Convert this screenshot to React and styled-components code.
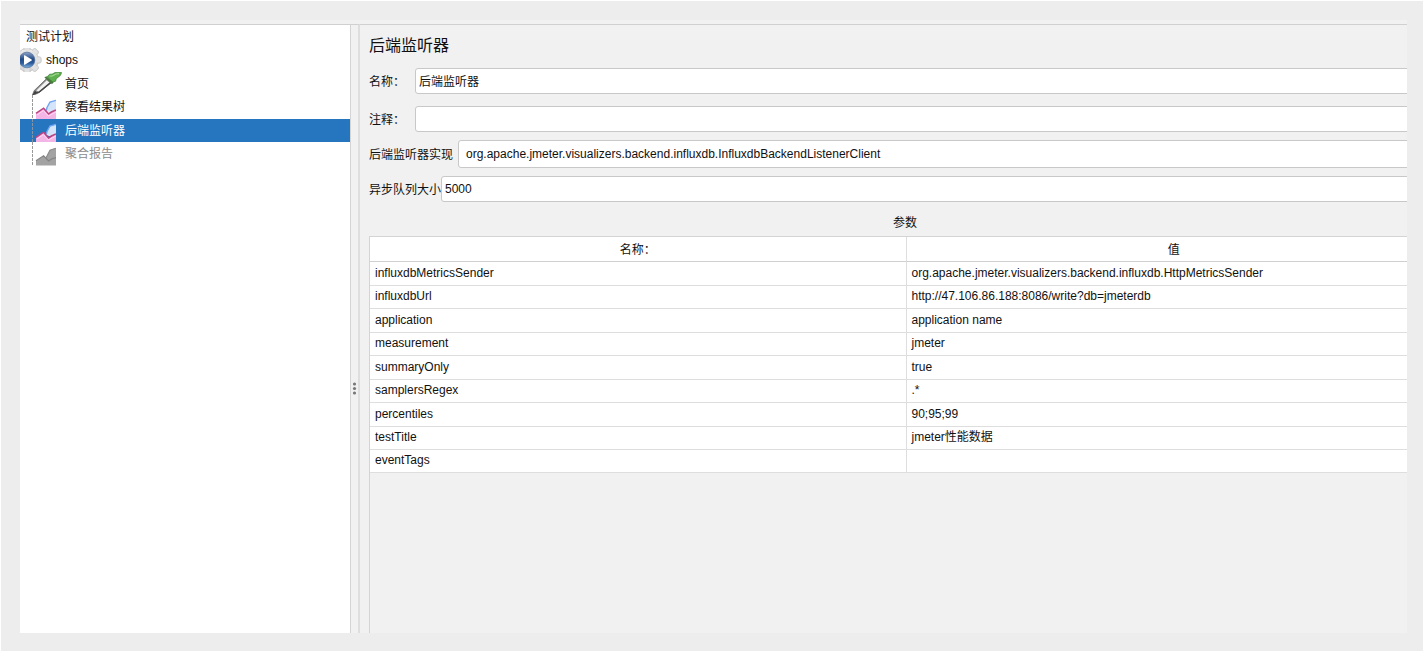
import React, { useState } from 'react';
import styled, { createGlobalStyle } from 'styled-components';

const GlobalStyle = createGlobalStyle`
  * {
    box-sizing: border-box;
  }

  body {
    margin: 0;
    background: #ededed;
    color: #111;
    font-family: "Liberation Sans", "Noto Sans CJK SC", sans-serif;
    font-size: 12px;
    line-height: 16px;
  }

  button, input, select {
    font: inherit;
    color: inherit;
  }
`;

const Page = styled.div`
  display: flex;
  min-height: 100vh;
  padding: 19px 16px 18px 19px;
  border-top: 1px solid #fff;
  border-left: 1px solid #fff;
`;

const Window = styled.div`
  flex: 1;
  min-width: 0;
  display: flex;
  padding-top: 4px;
  background: #f1f1f1;
`;

const Sidebar = styled.nav`
  flex: 0 0 331px;
  background: #fff;
  border-top: 1px solid #d0d0d0;
  border-right: 1px solid #d4d4d4;
`;

const Tree = styled.ul`
  margin: 0;
  padding: 0;
  list-style: none;
`;

const TreeItem = styled.li`
  height: 23px;

  &:nth-child(even) {
    height: 24px;
  }
`;

const TreeButton = styled.button`
  display: flex;
  align-items: center;
  width: 100%;
  height: 100%;
  padding: 0 0 0 ${({ $indent }) => $indent}px;
  border: 0;
  text-align: left;
  overflow: hidden;
  background: ${({ $selected }) => ($selected ? '#2675bf' : 'transparent')};
  color: ${({ $selected, $muted }) => ($selected ? '#fff' : $muted ? '#8c8c8c' : '#111')};
`;

const IconCell = styled.span`
  flex: 0 0 ${({ $width }) => $width}px;
  display: flex;
  height: 100%;

  svg {
    display: block;
    flex: none;
  }
`;

const Splitter = styled.div`
  flex: 0 0 9px;
  display: flex;
  flex-direction: column;
  align-items: center;
  border-top: 1px solid #d0d0d0;
  border-right: 2px solid #dedede;

  &::before {
    content: '';
    flex: 3;
  }

  &::after {
    content: '';
    flex: 2;
  }
`;

const Editor = styled.main`
  flex: 1;
  min-width: 0;
  display: flex;
  overflow: hidden;
  border-top: 1px solid #d0d0d0;
  padding-left: 9px;
`;

/* the form is wider than its viewport and runs out at the right */
const Form = styled.div`
  flex: 0 0 auto;
  width: calc(100% + 34px);
  display: flex;
  flex-direction: column;
`;

const Title = styled.h1`
  margin: 9px 0 10px;
  font-size: 16px;
  line-height: 24px;
  font-weight: 400;
`;

const Field = styled.div`
  display: flex;
  align-items: center;
  gap: ${({ $gap }) => $gap || 0}px;
  margin-bottom: ${({ $space }) => $space}px;
`;

const Label = styled.label`
  flex: 0 0 auto;
  min-width: ${({ $width }) => ($width ? `${$width}px` : 'auto')};
  padding-top: 2px;
`;

const TextInput = styled.input`
  flex: 1;
  min-width: 0;
  height: 26px;
  padding: 0 3px 1px;
  border: 1px solid #c8c8c8;
  border-radius: 3px;
  background: #fff;
`;

const Select = styled.select`
  flex: 1;
  min-width: 0;
  height: 28px;
  padding: 0 7px;
  border: 1px solid #c8c8c8;
  border-radius: 3px;
  background: #fff;
  appearance: none;
`;

const TableView = styled.div`
  flex: 1;
  border-top: 1px solid #d4d4d4;
  border-left: 1px solid #d4d4d4;
`;

const TableTitle = styled.h2`
  margin: 0 0 4px;
  padding-top: 1px;
  font-size: 12px;
  line-height: 18px;
  font-weight: 400;
  text-align: center;
`;

const Table = styled.table`
  width: 100%;
  table-layout: fixed;
  border-collapse: separate;
  border-spacing: 0;
  background: #fff;

  th, td {
    padding: 0 5px;
    border-bottom: 1px solid #dedede;
    font-weight: 400;
    line-height: 16px;
  }

  th + th, td + td {
    border-left: 1px solid #dedede;
  }

  th {
    height: 25px;
    padding-top: 2px;
    border-bottom-color: #d0d0d0;
  }

  td {
    height: 23px;
    padding-bottom: 2px;
    text-align: left;
  }

  tbody tr:nth-child(odd):not(:last-child) td {
    height: 24px;
  }
`;

const GearIcon = () => (
    <svg width="22" height="24" viewBox="0 0 22 24">
        <defs>
            <linearGradient id="gear" gradientUnits="userSpaceOnUse" x1="0" y1="0" x2="0" y2="24">
                <stop offset="0" stopColor="#ececec" />
                <stop offset="1" stopColor="#d2d2d2" />
            </linearGradient>
            <linearGradient id="play" x1="0" y1="0" x2="0" y2="1">
                <stop offset="0" stopColor="#8ba3c9" />
                <stop offset="0.45" stopColor="#234a86" />
                <stop offset="0.7" stopColor="#2c5c9c" />
                <stop offset="1" stopColor="#7fb2e2" />
            </linearGradient>
        </defs>
        <g fill="url(#gear)" stroke="#c4c4c4" strokeWidth=".8">
            {[-90, -45, 0, 45, 90].map((angle) => (
                <rect key={angle} x="14" y="8.8" width="7.2" height="6.4" rx="2" transform={`rotate(${angle} 7 12)`} />
            ))}
            <circle cx="7" cy="12" r="11.4" />
        </g>
        <g fill="#e2e2e2">
            {[-90, -45, 0, 45, 90].map((angle) => (
                <rect key={angle} x="14" y="9.6" width="6" height="4.8" rx="1.4" transform={`rotate(${angle} 7 12)`} />
            ))}
        </g>
        <circle cx="7" cy="12" r="8.6" fill="#cdd3dc" />
        <circle cx="7" cy="12" r="7.8" fill="url(#play)" stroke="#4d658d" strokeWidth=".6" />
        <path d="M4 7.6Q4 7 4.8 7.3L11.6 11.4Q12.2 12 11.6 12.6L4.8 16.7Q4 17 4 16.4Z" fill="#fff" />
    </svg>
);

const DropperIcon = () => (
    <svg width="31" height="24" viewBox="0 0 31 24">
        <path d="M1 24L3.2 18.6L15.6 6.6L20.4 10.6L8.4 20.4Z" fill="#8d8d8d" stroke="#6a6a6a" strokeWidth=".8" />
        <path d="M5.4 18.6L15.8 8.2L18.4 10.4L7.8 19.4Z" fill="#f2f2f2" />
        <path d="M1 24L4 18.6L6 20.8Z" fill="#444" />
        <path d="M3.4 21.6L8.2 20L19.8 10.6" fill="none" stroke="#444" strokeWidth="1.3" />
        <path d="M13.4 5.6L15.4 4.2L22.6 10.2L21 12.2Z" fill="#4a7a3e" />
        <path d="M16.2 4.8L18.6 2.2L21 2.2L24 .6L30.6 .6L29.4 3.4L25.2 6.8L24.6 9.2L22 10Z" fill="#5fb04e" stroke="#43883a" strokeWidth=".8" />
        <path d="M18.6 4.2L21.4 3.8L25 2L28 1.6" fill="none" stroke="#a2d891" strokeWidth="1.2" />
    </svg>
);

const ChartIcon = ({ muted, selected }) => (
    <svg width="26" height="24" viewBox="0 0 26 24">
        <path d="M2.5 0V24" stroke={selected ? '#8294a6' : '#999'} strokeWidth="1" strokeDasharray="3 1" />
        {muted ? (
            <>
                <path d="M6 23.5V19L13.6 14L16 15.5L20 8L26 6V23.5Z" fill="#a3a3a3" />
                <path d="M16 16L20 8.2L26 6.2" fill="none" stroke="#8c8c8c" strokeWidth="1.2" />
                <path d="M6 18.8L13.6 13.8L18.6 19L21.5 17L26 15.5" fill="none" stroke="#858585" strokeWidth="1.3" />
            </>
        ) : (
            <>
                <path d="M16 16L17 12.5L20 7L26 5.2V17H19Z" fill="#d3e4fb" />
                <path d="M16.2 15.5L17 12.5L20 7L26 5.4" fill="none" stroke="#6fa3f2" strokeWidth="1.4" />
                <path d="M6 24V19L13.6 13.4L18.8 19.4L21.4 17.4L26 15.6V24Z" fill="#f3b4e6" />
                <path d="M6 18.4L13.6 13.2L18.6 19L21.4 17L26 15" fill="none" stroke="#bd4480" strokeWidth="1.6" />
                <path d="M7 20L13.4 15.6L18.4 21L26 17" fill="none" stroke="#fbd9f3" strokeWidth="1" />
            </>
        )}
    </svg>
);

const GripIcon = () => (
    <svg width="5" height="13" viewBox="0 0 5 13">
        <circle cx="2.5" cy="2" r="1.6" fill="#777" />
        <circle cx="2.5" cy="6.5" r="1.6" fill="#777" />
        <circle cx="2.5" cy="11" r="1.6" fill="#777" />
    </svg>
);

const nodes = [
    { id: 'plan', label: '测试计划', indent: 6 },
    { id: 'shops', label: 'shops', indent: 0, iconWidth: 26, icon: GearIcon },
    { id: 'home', label: '首页', indent: 11, iconWidth: 34, icon: DropperIcon },
    { id: 'tree', label: '察看结果树', indent: 10, iconWidth: 35, icon: ChartIcon },
    { id: 'backend', label: '后端监听器', indent: 10, iconWidth: 35, icon: ChartIcon },
    { id: 'report', label: '聚合报告', indent: 10, iconWidth: 35, icon: ChartIcon, muted: true },
];

const params = [
    ['influxdbMetricsSender', 'org.apache.jmeter.visualizers.backend.influxdb.HttpMetricsSender'],
    ['influxdbUrl', 'http://47.106.86.188:8086/write?db=jmeterdb'],
    ['application', 'application name'],
    ['measurement', 'jmeter'],
    ['summaryOnly', 'true'],
    ['samplersRegex', '.*'],
    ['percentiles', '90;95;99'],
    ['testTitle', 'jmeter性能数据'],
    ['eventTags', ''],
];

const App = () => {
    const [selected, setSelected] = useState('backend');

    return (
        <Page>
            <GlobalStyle />
            <Window>
                <Sidebar>
                    <Tree>
                        {nodes.map(({ id, label, indent, iconWidth, icon: Icon, muted }) => (
                            <TreeItem key={id}>
                                <TreeButton
                                    type="button"
                                    $indent={indent}
                                    $selected={id === selected}
                                    $muted={muted}
                                    onClick={() => setSelected(id)}
                                >
                                    {Icon && (
                                        <IconCell $width={iconWidth}>
                                            {Icon === ChartIcon
                                                ? <ChartIcon muted={muted} selected={id === selected} />
                                                : <Icon />}
                                        </IconCell>
                                    )}
                                    {label}
                                </TreeButton>
                            </TreeItem>
                        ))}
                    </Tree>
                </Sidebar>

                <Splitter>
                    <GripIcon />
                </Splitter>

                <Editor>
                    <Form>
                        <Title>后端监听器</Title>
                        <Field $space={12}>
                            <Label htmlFor="name" $width={46}>名称：</Label>
                            <TextInput id="name" defaultValue="后端监听器" />
                        </Field>
                        <Field $space={8}>
                            <Label htmlFor="comment" $width={46}>注释：</Label>
                            <TextInput id="comment" />
                        </Field>
                        <Field $gap={5} $space={8}>
                            <Label htmlFor="impl">后端监听器实现</Label>
                            <Select id="impl">
                                <option>org.apache.jmeter.visualizers.backend.influxdb.InfluxdbBackendListenerClient</option>
                            </Select>
                        </Field>
                        <Field $space={11}>
                            <Label htmlFor="queue">异步队列大小</Label>
                            <TextInput id="queue" defaultValue="5000" />
                        </Field>

                        <TableTitle id="params-title">参数</TableTitle>
                        <TableView>
                            <Table aria-labelledby="params-title">
                                <thead>
                                    <tr>
                                        <th scope="col">名称：</th>
                                        <th scope="col">值</th>
                                    </tr>
                                </thead>
                                <tbody>
                                    {params.map(([name, value]) => (
                                        <tr key={name}>
                                            <td>{name}</td>
                                            <td>{value}</td>
                                        </tr>
                                    ))}
                                </tbody>
                            </Table>
                        </TableView>
                    </Form>
                </Editor>
            </Window>
        </Page>
    );
};

export default App;
